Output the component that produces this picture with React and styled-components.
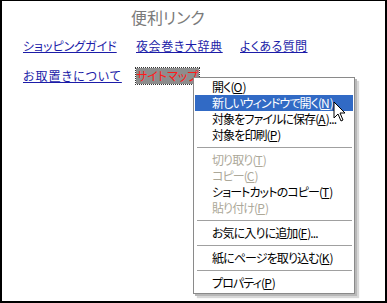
import styled, { createGlobalStyle } from 'styled-components';

const Global = createGlobalStyle`
  html, body { margin: 0; padding: 0; background: #fff; }
  body {
    font-family: "Noto Sans CJK JP", "Noto Sans", sans-serif;
    font-feature-settings: "palt";
  }
`;

const Frame = styled.div`
  position: relative;
  width: 387px;
  height: 303px;
  box-sizing: border-box;
  border: 2px solid #000;
  border-top-width: 1px;
  background: #fff;
  overflow: hidden;
`;

const Title = styled.div`
  padding: 5px 0 0 129px;
  height: 22px;
  font-size: 16px;
  line-height: 22px;
  color: #7a7a7a;
`;

const LinkGrid = styled.div`
  display: grid;
  grid-template-columns: 113px 104px auto;
  row-gap: 14px;
  padding: 10px 0 0 21px;
`;

const Link = styled.a`
  justify-self: start;
  font-size: 12px;
  line-height: 16px;
  color: #1c1ca8;
  text-decoration: underline;
  letter-spacing: ${p => p.$ls || 0}px;
  ${p => p.$active && `
    color: #ff1a1a;
    background: #8d8d8d;
    outline: 1px dotted #333;
    text-decoration: none;
    padding: 0 1px 0 0;
  `}
`;

const Menu = styled.div`
  position: absolute;
  left: 191px;
  top: 76px;
  width: 162px;
  box-sizing: border-box;
  background: #fff;
  border: 1px solid #8a8a8a;
  padding: 1px 0 2px;
  box-shadow: 2px 2px 0 #b8b8b8, 4px 4px 1px #d8d8d8;
  font-size: 12px;
`;

const Item = styled.div`
  height: 16px;
  line-height: 16px;
  padding-left: 17px;
  margin: 0 1px;
  letter-spacing: -0.9px;
  white-space: nowrap;
  color: ${p => p.$disabled ? '#aca899' : p.$hover ? '#fff' : '#000'};
  background: ${p => p.$hover ? '#316ac5' : 'transparent'};
`;

const Key = styled.span`
  text-decoration: underline;
  letter-spacing: 0;
`;

const Sep = styled.div`
  height: 1px;
  margin: 4px 2px 4px 3px;
  background: #a0a0a0;
`;

const Cursor = styled.svg`
  position: absolute;
  left: 331px;
  top: 100px;
`;

function MenuItem({ label, k, tail = '', ...rest }) {
  return (
    <Item {...rest}>
      {label}(<Key>{k}</Key>){tail}
    </Item>
  );
}

function App() {
  return (
    <>
      <Global />
      <Frame>
        <Title>便利リンク</Title>
        <LinkGrid>
          <Link href="#">ショッピングガイド</Link>
          <Link href="#" $ls={0.6}>夜会巻き大辞典</Link>
          <Link href="#" $ls={0.4}>よくある質問</Link>
          <Link href="#" $ls={1}>お取置きについて</Link>
          <Link href="#" $active>サイトマップ</Link>
        </LinkGrid>

        <Menu>
          <MenuItem label="開く" k="O" />
          <MenuItem label="新しいウィンドウで開く" k="N" $hover />
          <MenuItem label="対象をファイルに保存" k="A" tail="..." />
          <MenuItem label="対象を印刷" k="P" />
          <Sep />
          <MenuItem label="切り取り" k="T" $disabled />
          <MenuItem label="コピー" k="C" $disabled />
          <MenuItem label="ショートカットのコピー" k="T" />
          <MenuItem label="貼り付け" k="P" $disabled />
          <Sep />
          <MenuItem label="お気に入りに追加" k="F" tail="..." />
          <Sep />
          <MenuItem label="紙にページを取り込む" k="K" />
          <Sep />
          <MenuItem label="プロパティ" k="P" />
        </Menu>

        <Cursor width="14" height="22" viewBox="0 0 14 22">
          <path d="M1 1 L1 17 L5 13 L8 20 L10 19 L7 12 L12 12 Z" fill="#fff" stroke="#000" strokeWidth="1" strokeLinejoin="miter" />
        </Cursor>
      </Frame>
    </>
  );
}

export default App;
